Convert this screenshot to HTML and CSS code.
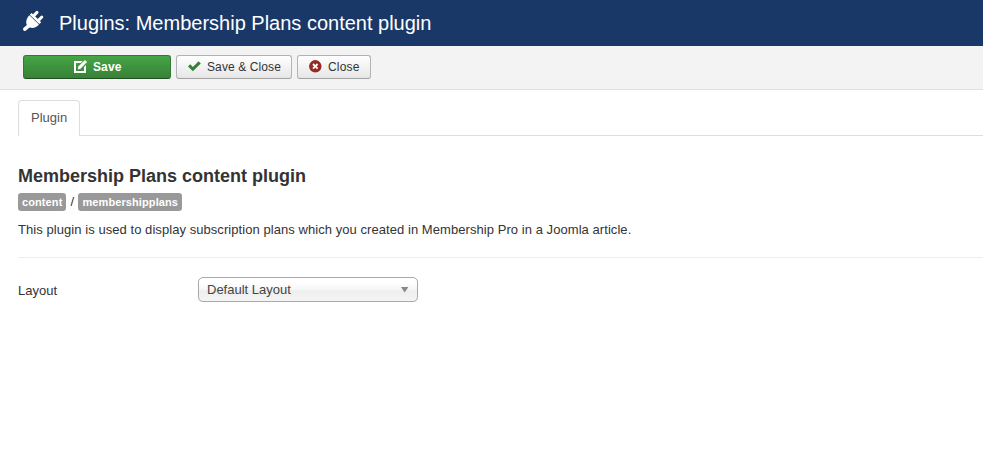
FILE: index.html
```html
<!DOCTYPE html>
<html lang="en">
<head>
<meta charset="utf-8">
<title>Plugins: Membership Plans content plugin</title>
<link rel="stylesheet" href="styles.css">
</head>
<body>
<header class="header">
  <svg class="plug" viewBox="0 0 22 22" width="22" height="22"><path fill="#fff" d="M7.4 5.2 17 14.6C14.2 18 9.4 19.2 6.2 16.6C2.8 13.6 4.2 8.6 7.4 5.2ZM7.8 4.7 9.6 2.9 19.2 12.3 17.4 14.1Z"/><path d="M2.8 19.2 7 15.6" stroke="#fff" stroke-width="3.6" stroke-linecap="round"/><path d="M11.6 5.9 15 2.4M16.2 10.6 19.8 7" stroke="#fff" stroke-width="3" stroke-linecap="round"/></svg>
  <h1 class="page-title">Plugins: Membership Plans content plugin</h1>
</header>
<div class="toolbar">
  <button class="btn btn-save"><svg class="icon" viewBox="0 0 13 13" width="13" height="13"><path fill="#fff" d="M0 1H8.5L6.7 3H2V11H10V7L12 5V13H0Z"/><path fill="#fff" d="M3.8 9.4 4.3 6.6 10.4.4Q11-.1 11.6.4L12.6 1.4Q13.1 2 12.6 2.6L6.5 8.8Z"/></svg><span>Save</span></button>
  <button class="btn btn-apply"><svg class="icon" viewBox="0 0 13 13" width="13" height="13"><path fill="#378137" d="M0 6.4 2.2 4.2 4.9 6.9 10.6 1.2 12.8 3.4 4.9 11.3Z"/></svg><span>Save &amp; Close</span></button>
  <button class="btn btn-close"><svg class="icon" viewBox="0 0 13 13" width="13" height="13"><circle cx="6.3" cy="6.3" r="6.2" fill="#942a25"/><path d="M4 4 8.6 8.6M8.6 4 4 8.6" stroke="#fff" stroke-width="1.8"/></svg><span>Close</span></button>
</div>
<nav class="tabs"><a class="tab">Plugin</a></nav>
<main class="content">
  <h2 class="plugin-name">Membership Plans content plugin</h2>
  <div class="labels"><span class="label">content</span><span class="slash">/</span><span class="label">membershipplans</span></div>
  <p class="description">This plugin is used to display subscription plans which you created in Membership Pro in a Joomla article.</p>
  <hr class="divider">
  <div class="field">
    <span class="field-label">Layout</span>
    <div class="select"><span>Default Layout</span><svg width="8" height="6" viewBox="0 0 8 6"><path fill="#888" d="M0 0H7.4L3.7 5.5Z"/></svg></div>
  </div>
</main>
</body>
</html>
```
FILE: styles.css
```css
* { box-sizing: border-box; }
body {
  margin: 0;
  background: #fff;
  color: #333;
  font: 13px/18px "Liberation Sans", Arial, sans-serif;
  overflow: hidden;
}
.header {
  display: flex;
  align-items: center;
  height: 46px;
  padding-left: 22px;
  background: #1a3867;
}
.plug { margin-top: -4px; }
.page-title {
  margin: 0 0 0 15px;
  color: #fff;
  font-size: 20px;
  font-weight: 400;
  line-height: 46px;
  white-space: nowrap;
}
.toolbar {
  display: flex;
  gap: 5px;
  height: 44px;
  padding: 9px 23px 0;
  background: #f3f3f3;
  border-bottom: 1px solid #e0e0e0;
}
.btn {
  display: flex;
  align-items: center;
  height: 24px;
  padding: 0 0 0 11px;
  border: 1px solid #b3b3b3;
  border-bottom-color: #a2a2a2;
  border-radius: 3px;
  background: linear-gradient(#fff, #e6e6e6);
  color: #333;
  font: 12px/22px "Liberation Sans", Arial, sans-serif;
  letter-spacing: .1px;
  white-space: nowrap;
}
.btn-apply { width: 116px; }
.btn-close { width: 74px; }
.btn-close span { letter-spacing: .2px; }
.icon { flex: none; margin: -2px 6px 0 0; }
.btn-save {
  width: 148px;
  padding-left: 50px;
  border-color: #317a31 #317a31 #205020;
  background: linear-gradient(#46a546, #378137);
  color: #fff;
  font-weight: 700;
}
.tabs {
  display: flex;
  height: 46px;
  margin-left: 18px;
  padding-top: 10px;
  box-shadow: inset 0 -1px #ddd;
}
.tab {
  width: 62px;
  padding: 8px 12px;
  border: 1px solid #ddd;
  border-bottom: 0;
  border-radius: 4px 4px 0 0;
  background: #fff;
  color: #555;
}
.content { padding-left: 18px; }
.plugin-name {
  margin: 30px 0 0;
  font-size: 18px;
  line-height: 20px;
}
.labels {
  display: flex;
  height: 18px;
  margin-top: 7px;
}
.label {
  padding: 2px 4px;
  border-radius: 3px;
  background: #999;
  color: #fff;
  font-size: 11px;
  font-weight: 700;
  letter-spacing: .1px;
  line-height: 15px;
}
.slash { width: 12px; line-height: 17px; text-align: center; }
.description { margin: 10px 0 0; letter-spacing: .06px; }
.divider {
  height: 1px;
  margin: 18px 0 19px;
  border: 0;
  background: #eee;
}
.field { display: flex; }
.field-label { width: 180px; padding-top: 5px; }
.select {
  display: flex;
  align-items: center;
  justify-content: space-between;
  width: 220px;
  height: 25px;
  padding: 0 8px;
  border: 1px solid #aaa;
  border-radius: 5px;
  background: linear-gradient(#fff 20%, #f6f6f6 50%, #eee 52%, #f4f4f4);
  box-shadow: 0 1px 1px rgba(0, 0, 0, .1);
  color: #444;
}
```
